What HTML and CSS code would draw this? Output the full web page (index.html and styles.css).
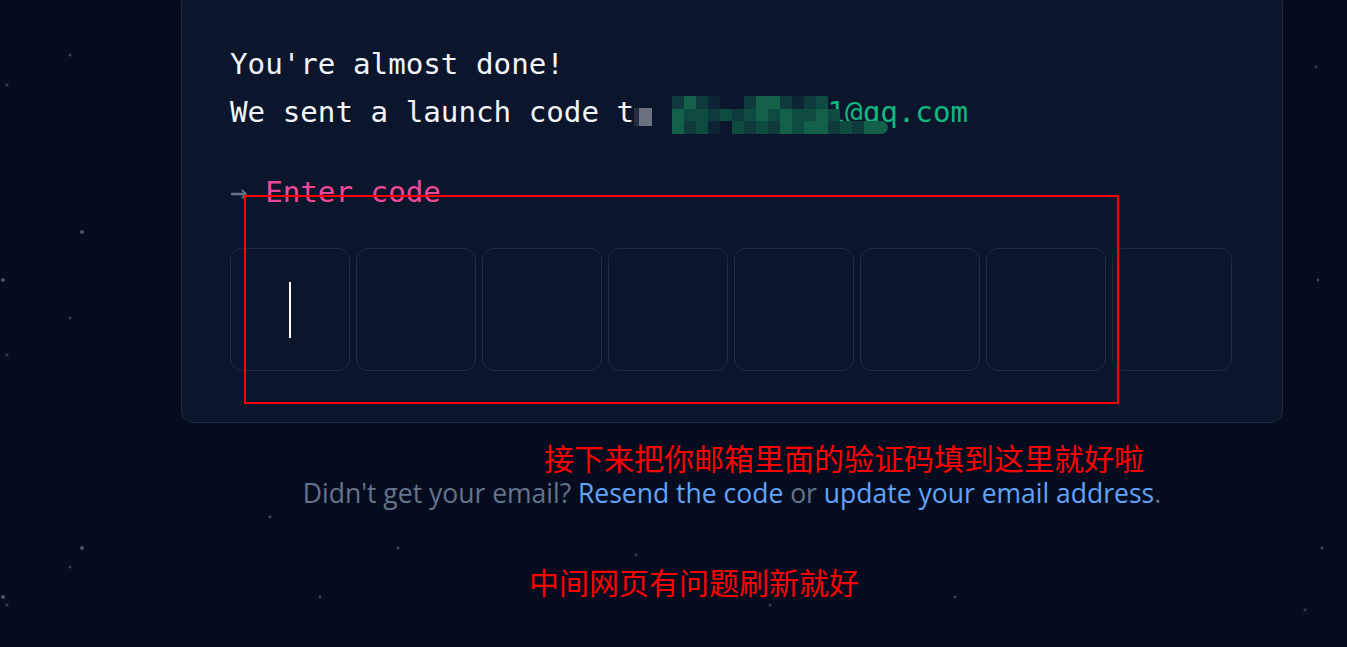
FILE: index.html
```html
<!DOCTYPE html>
<html lang="en">
<head>
<meta charset="utf-8">
<title>Enter code</title>
<link rel="stylesheet" href="styles.css">
</head>
<body>
<main class="page">
  <section class="card">
    <p class="line">You're almost done!</p>
    <p class="line">We sent a launch code t<span class="hidden-o">o</span> <span class="email"><span class="masked">xxxxxxxxx</span>1@qq.com<span class="mosaic"><i class="c1"></i><i class="c2"></i><i class="c1"></i><i class="c0"></i><i class="cx"></i><i class="cx"></i><i class="c1"></i><i class="c2"></i><i class="c2"></i><i class="c1"></i><i class="c0"></i><i class="c1"></i><i class="c3"></i><i class="cx"></i><i class="cx"></i><i class="cx"></i><i class="cx"></i><i class="cx"></i><i class="c2"></i><i class="c3"></i><i class="c3"></i><i class="c1"></i><i class="c3"></i><i class="c1"></i><i class="c3"></i><i class="c2"></i><i class="c3"></i><i class="c2"></i><i class="c3"></i><i class="c3"></i><i class="c2"></i><i class="c3"></i><i class="cx"></i><i class="cx"></i><i class="cx"></i><i class="cx"></i><i class="c2"></i><i class="c1"></i><i class="c3"></i><i class="c0"></i><i class="cx"></i><i class="c3"></i><i class="c1"></i><i class="c3"></i><i class="c1"></i><i class="c2"></i><i class="c3"></i><i class="c2"></i><i class="c2"></i><i class="c1"></i><i class="c3"></i><i class="c1"></i><i class="c2"></i><i class="c2 end"></i></span></span></p>
    <p class="prompt"><span class="arrow">→</span> <span class="pink">Enter code</span></p>
    <div class="codes">
      <div class="box"><span class="caret"></span></div>
      <div class="box"></div>
      <div class="box"></div>
      <div class="box"></div>
      <div class="box"></div>
      <div class="box"></div>
      <div class="box"></div>
      <div class="box"></div>
    </div>
  </section>
  <p class="footer">Didn't get your email? <a class="link">Resend the code</a> or <a class="link">update your email address</a>.</p>
  <div class="annot-box"></div>
  <p class="note note-one">接下来把你邮箱里面的验证码填到这里就好啦</p>
  <p class="note note-two">中间网页有问题刷新就好</p>
</main>
</body>
</html>
```

FILE: styles.css
```css
* { box-sizing: border-box; }
html, body {
  margin: 0;
  height: 100%;
  overflow: hidden;
}
body {
  background-color: #050c1f;
  background-image:
    radial-gradient(circle at 70px 55px, rgba(148,163,184,.35) 0 1px, transparent 2px),
    radial-gradient(circle at 7px 85px, rgba(148,163,184,.3) 0 1px, transparent 2px),
    radial-gradient(circle at 82px 232px, rgba(148,163,184,.45) 0 1.5px, transparent 2.5px),
    radial-gradient(circle at 3px 280px, rgba(148,163,184,.45) 0 1.5px, transparent 2.5px),
    radial-gradient(circle at 70px 318px, rgba(148,163,184,.3) 0 1px, transparent 2px),
    radial-gradient(circle at 7px 355px, rgba(148,163,184,.3) 0 1px, transparent 2px),
    radial-gradient(circle at 82px 548px, rgba(148,163,184,.45) 0 1.5px, transparent 2.5px),
    radial-gradient(circle at 70px 567px, rgba(148,163,184,.3) 0 1px, transparent 2px),
    radial-gradient(circle at 3px 597px, rgba(148,163,184,.45) 0 1.5px, transparent 2.5px),
    radial-gradient(circle at 7px 605px, rgba(148,163,184,.3) 0 1px, transparent 2px),
    radial-gradient(circle at 270px 517px, rgba(148,163,184,.35) 0 1px, transparent 2px),
    radial-gradient(circle at 398px 548px, rgba(148,163,184,.35) 0 1px, transparent 2px),
    radial-gradient(circle at 320px 597px, rgba(148,163,184,.35) 0 1px, transparent 2px),
    radial-gradient(circle at 636px 555px, rgba(148,163,184,.3) 0 1px, transparent 2px),
    radial-gradient(circle at 770px 605px, rgba(148,163,184,.3) 0 1px, transparent 2px),
    radial-gradient(circle at 955px 597px, rgba(148,163,184,.35) 0 1px, transparent 2px),
    radial-gradient(circle at 1316px 67px, rgba(148,163,184,.3) 0 1px, transparent 2px),
    radial-gradient(circle at 1318px 280px, rgba(148,163,184,.35) 0 1px, transparent 2px),
    radial-gradient(circle at 1322px 548px, rgba(148,163,184,.35) 0 1px, transparent 2px),
    radial-gradient(circle at 1305px 610px, rgba(148,163,184,.3) 0 1px, transparent 2px);
}
.page {
  position: relative;
  display: flow-root;
  height: 647px;
}
.card {
  margin: -10px 0 0 181px;
  width: 1102px;
  padding: 49px 48px 51px 48px;
  background: #0b152c;
  border: 1px solid #1f2738;
  border-radius: 12px;
  font-family: "DejaVu Sans Mono", "Liberation Mono", monospace;
  font-size: 29.2px;
  color: #f1f5f9;
}
.line {
  margin: 0;
  line-height: 48px;
  white-space: nowrap;
}
.hidden-o {
  color: transparent;
  background: linear-gradient(90deg, #262d3e 0 30%, #6b7180 30% 100%);
  background-size: 100% 18px;
  background-position: 0 13px;
  background-repeat: no-repeat;
}
.email {
  position: relative;
  color: #10b981;
}
.masked { color: transparent; }
.mosaic {
  position: absolute;
  left: 3px;
  top: 1px;
  display: grid;
  grid-template-columns: repeat(18, 12px);
  grid-auto-rows: 12.5px;
}
.mosaic i { display: block; }
.mosaic .cx { background: transparent; }
.mosaic .c0 { background: #0c2434; }
.mosaic .c1 { background: #0f3a3c; }
.mosaic .c2 { background: #12604a; }
.mosaic .c3 { background: #0d4a40; }
.mosaic .end { border-radius: 0 8px 8px 0; }
.prompt {
  margin: 32px 0 0;
  line-height: 48px;
}
.arrow { color: #64748b; }
.pink { color: #ec4899; }
.codes {
  margin-top: 32px;
  display: flex;
  gap: 6px;
}
.box {
  width: 120px;
  height: 123px;
  border: 1px solid #232b3c;
  border-radius: 12px;
  display: flex;
  align-items: center;
  justify-content: center;
}
.caret {
  width: 2px;
  height: 56px;
  background: #ffffff;
}
.footer {
  margin: 56px 0 0 181px;
  width: 1102px;
  text-align: center;
  font-family: "Open Sans", "Noto Sans", sans-serif;
  font-size: 26.5px;
  line-height: 28px;
  color: #64748b;
}
.link { color: #60a5fa; }
.annot-box {
  position: absolute;
  left: 244px;
  top: 195px;
  width: 875px;
  height: 209px;
  border: 2px solid #ff0000;
}
.note {
  position: absolute;
  margin: 0;
  font-family: "Noto Sans CJK SC", "Noto Sans", sans-serif;
  font-size: 30px;
  line-height: 30px;
  color: #ff0000;
  white-space: nowrap;
}
.note-one { left: 544px; top: 442px; }
.note-two { left: 529px; top: 566px; }
```
